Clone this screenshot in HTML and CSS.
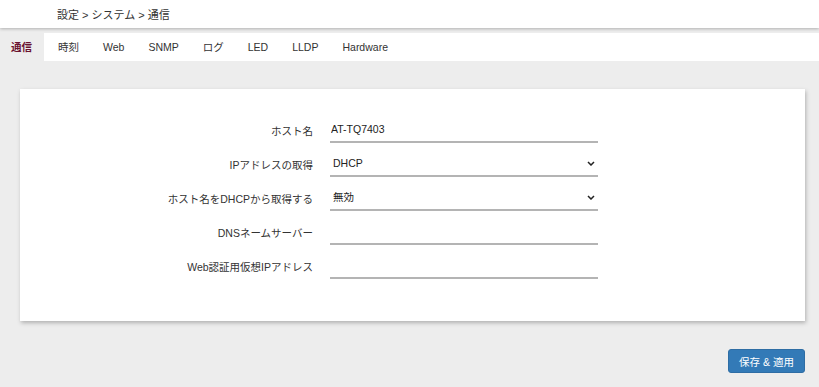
FILE: index.html
```html
<html>
<head><title>通信</title>
<meta content="text/html;charset=utf-8" http-equiv="Content-Type" />
<link rel="stylesheet" href="styles.css">
</head>
<body>

<div class="header">
	<div class="crumbs">設定 &gt; システム &gt; 通信</div>
</div>

<ul class="tabs">
	<li class="active">通信</li>
	<li>時刻</li>
	<li>Web</li>
	<li>SNMP</li>
	<li>ログ</li>
	<li>LED</li>
	<li>LLDP</li>
	<li>Hardware</li>
</ul>

<div class="main">
	<div class="card">
		<div class="form">
			<label>ホスト名</label>
			<input type="text" value="AT-TQ7403" />

			<label>IPアドレスの取得</label>
			<div class="sel">
				<select><option>DHCP</option><option>固定</option></select>
				<svg width="8" height="5" viewBox="0 0 8 5"><path d="M1 1 L4 4 L7 1" fill="none" stroke="#222" stroke-width="1.5"/></svg>
			</div>

			<label>ホスト名をDHCPから取得する</label>
			<div class="sel">
				<select><option>無効</option><option>有効</option></select>
				<svg width="8" height="5" viewBox="0 0 8 5"><path d="M1 1 L4 4 L7 1" fill="none" stroke="#222" stroke-width="1.5"/></svg>
			</div>

			<label>DNSネームサーバー</label>
			<input type="text" value="" />

			<label>Web認証用仮想IPアドレス</label>
			<input type="text" value="" />
		</div>
	</div>

	<div class="actions">
		<button class="save">保存 &amp; 適用</button>
	</div>
</div>

</body>
</html>
```

FILE: styles.css
```css
body{
	padding:0;
	margin:0;
	background-color:#ededed;
	color:#333;
	font-family: "Liberation Sans", "Noto Sans CJK JP", sans-serif;
	font-size:10.5px;
}

.header{
	background:#fff;
	height:28px;
	box-shadow:0 1px 3px rgba(0,0,0,0.25);
	display:flex;
	align-items:center;
}

.crumbs{
	padding-left:57px;
	color:#333;
	font-size:11px;
}

.tabs{
	list-style:none;
	margin:5px 0 0 0;
	padding:0;
	height:28px;
	background:#fff;
	display:flex;
}

.tabs li{
	padding:0 12px;
	line-height:28px;
	color:#333;
}

.tabs li.active{
	background:#ededed;
	color:#6a1230;
	font-weight:bold;
	padding:0 12px 0 11px;
	margin-right:2px;
}

.main{
	padding:28px 14px 0 20px;
}

.card{
	background:#fff;
	box-shadow:1px 2px 4px rgba(0,0,0,0.25);
	padding:28px 0 42px 0;
}

.form{
	display:grid;
	grid-template-columns:293px 268px;
	column-gap:17px;
	row-gap:8px;
	align-items:center;
}

.form label{
	text-align:right;
	color:#333;
	font-size:10.5px;
}

.form input, .form select{
	width:100%;
	height:26px;
	box-sizing:border-box;
	border:0;
	border-bottom:2px solid #b4b4b4;
	outline:none;
	padding:0 0 0 1px;
	font-family: "Liberation Sans", "Noto Sans CJK JP", sans-serif;
	font-size:10.5px;
	color:#222;
	background:transparent;
	appearance:none;
	-webkit-appearance:none;
	border-radius:0;
}

.form select{
	padding-left:3px;
}

.sel{
	position:relative;
}

.sel svg{
	position:absolute;
	right:3px;
	top:10px;
	pointer-events:none;
}

.actions{
	display:flex;
	justify-content:flex-end;
	padding-top:28px;
}

.save{
	background:#337ab7;
	color:#fff;
	border:1px solid #2e6da4;
	border-radius:3px;
	width:77px;
	height:24px;
	font-family: "Liberation Sans", "Noto Sans CJK JP", sans-serif;
	font-size:10.5px;
	padding:0;
}
```
